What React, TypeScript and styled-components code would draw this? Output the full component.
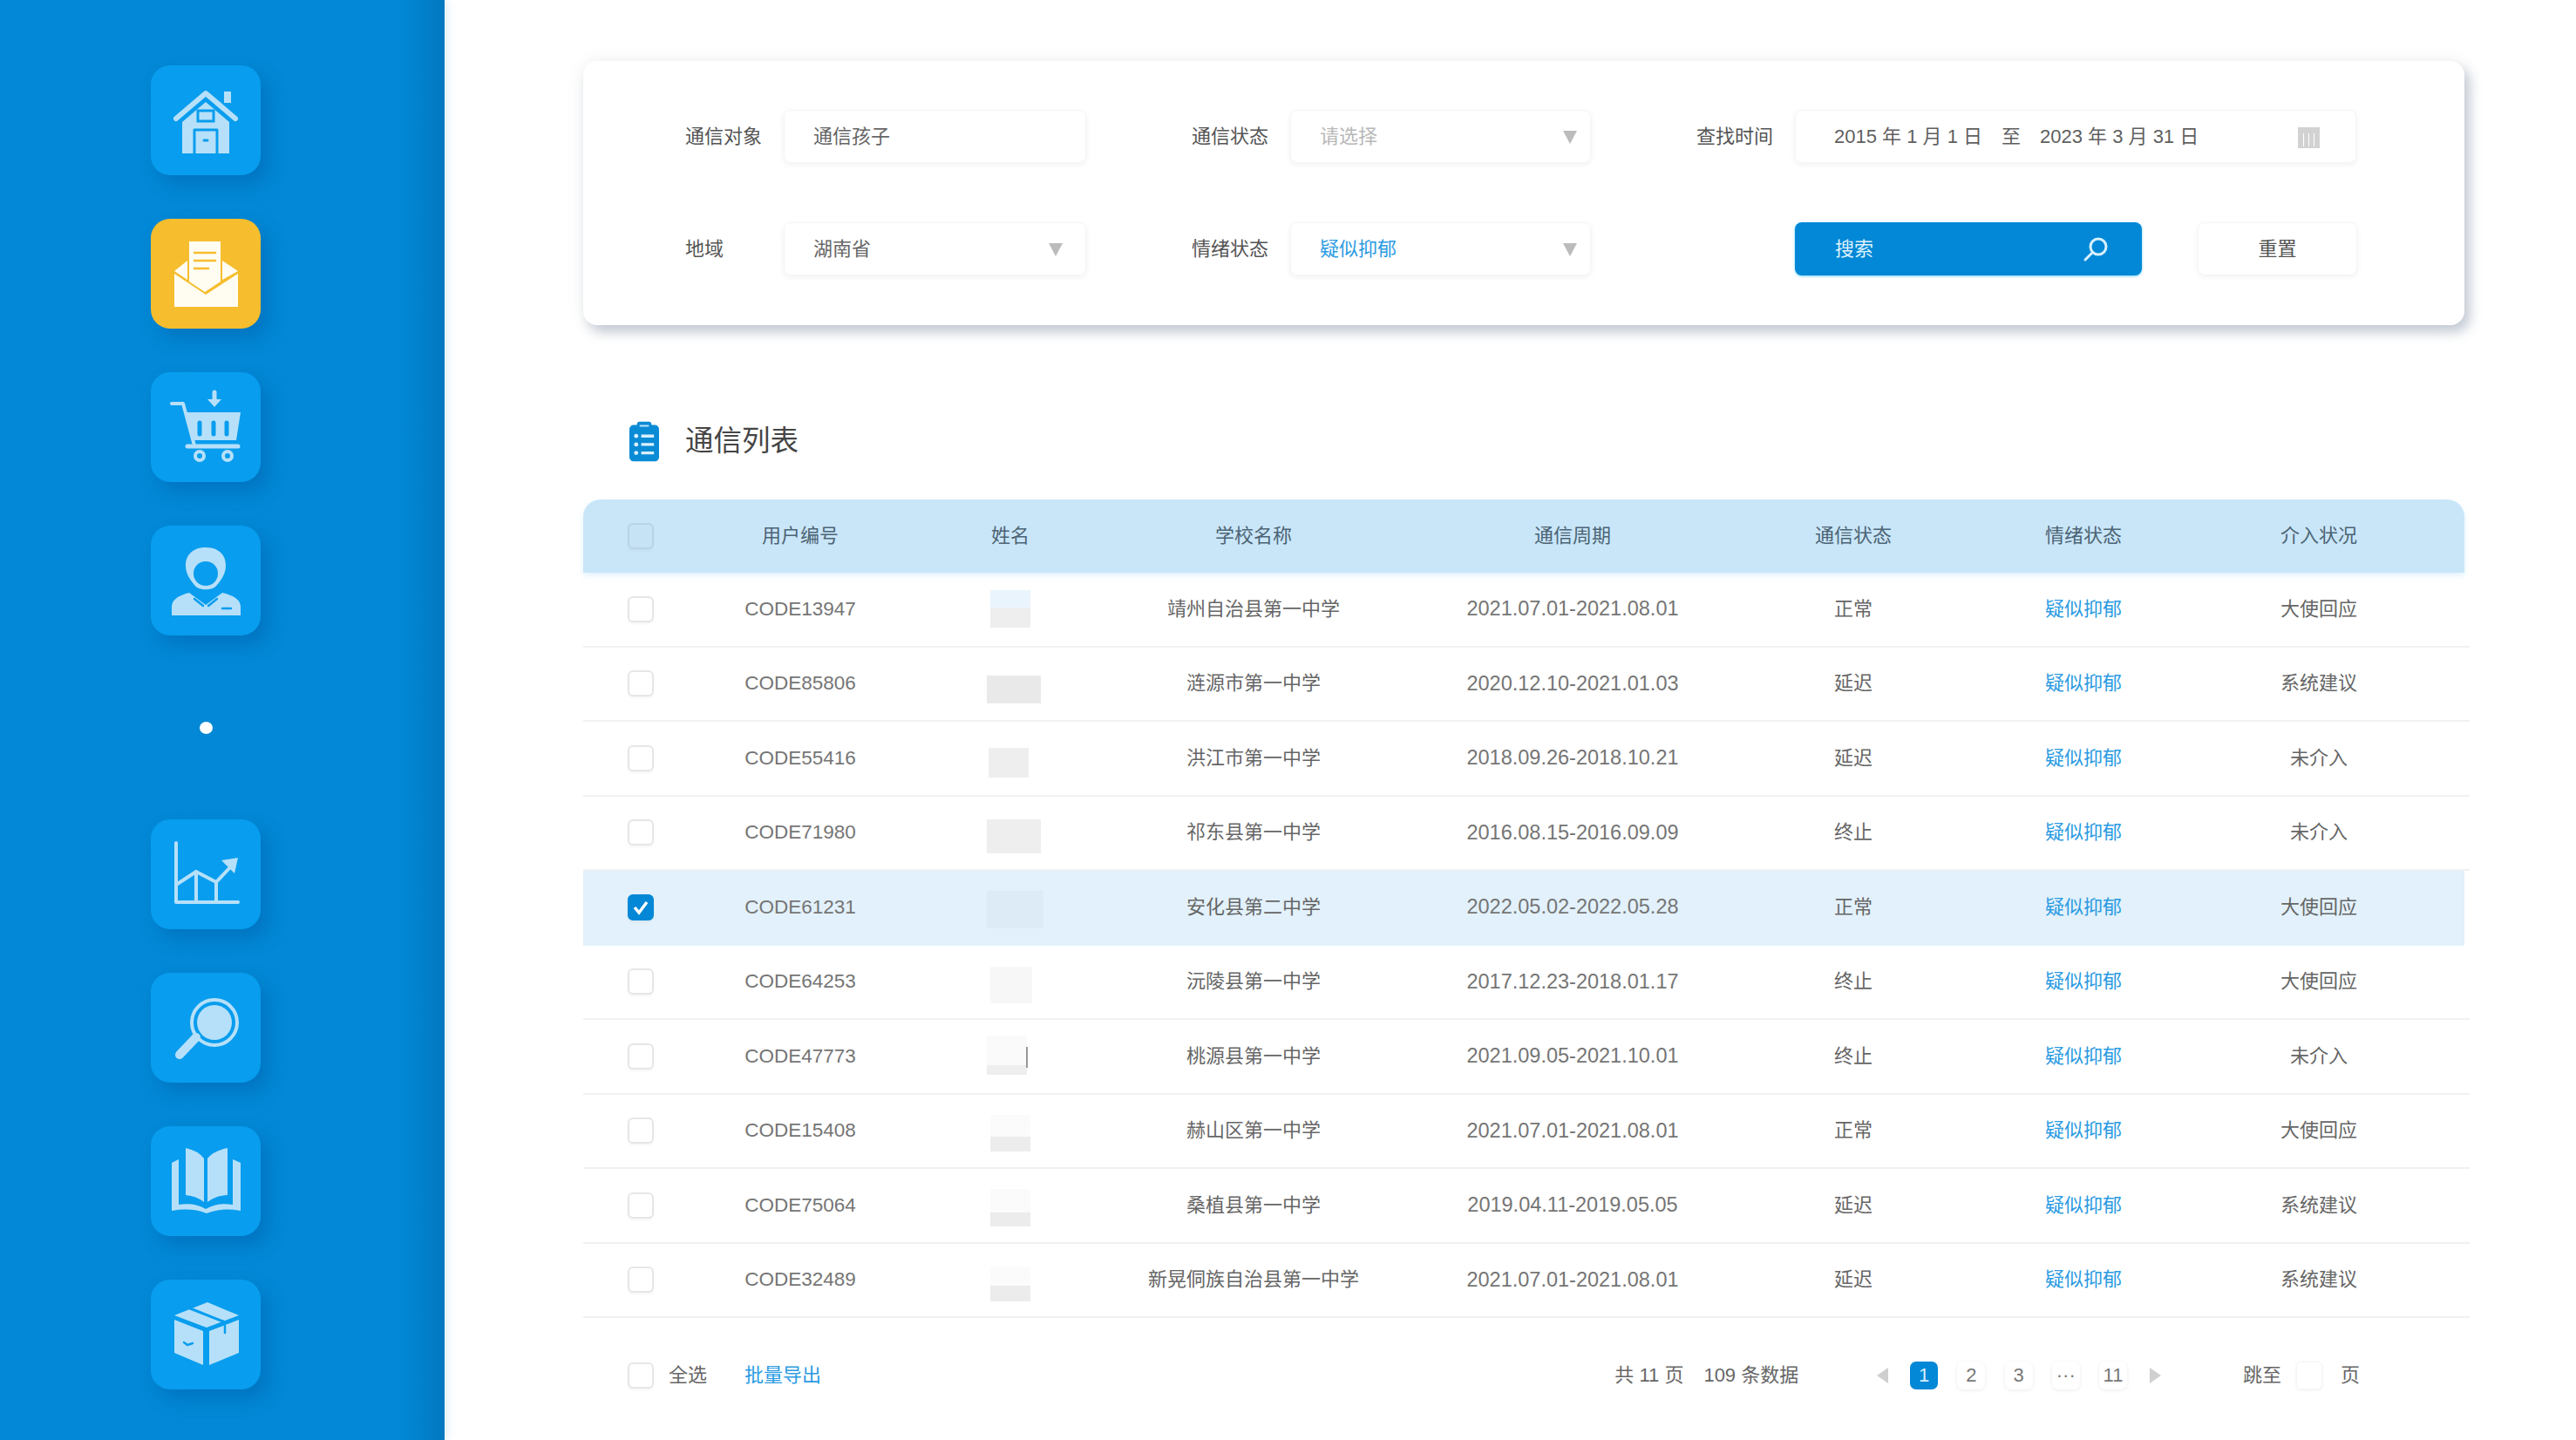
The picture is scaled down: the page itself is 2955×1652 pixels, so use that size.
import { ReactNode } from 'react';
import styled, { createGlobalStyle, css } from 'styled-components';

const blue = '#0288d6';
const link = '#2b9be2';

const GlobalStyle = createGlobalStyle`
  html, body {
    margin: 0;
    background: #fff;
    overflow: hidden;
  }

  * {
    box-sizing: border-box;
  }
`;

interface PatchSpec {
  w: number;
  h: number;
  top: number;
  shift?: number;
  split?: number;
  light?: string;
  tone: string;
  tick?: boolean;
}

interface RowData {
  code: string;
  school: string;
  period: string;
  status: string;
  care: string;
  patch: PatchSpec;
  selected?: boolean;
}

const rows: RowData[] = [
  { code: 'CODE13947', school: '靖州自治县第一中学', period: '2021.07.01-2021.08.01', status: '正常', care: '大使回应',
    patch: { w: 46, h: 43, top: 20, split: 20, light: '#e9f4fc', tone: '#eeeeee' } },
  { code: 'CODE85806', school: '涟源市第一中学', period: '2020.12.10-2021.01.03', status: '延迟', care: '系统建议',
    patch: { w: 62, h: 32, top: 32, shift: 4, tone: '#e9e9e9' } },
  { code: 'CODE55416', school: '洪江市第一中学', period: '2018.09.26-2018.10.21', status: '延迟', care: '未介入',
    patch: { w: 46, h: 34, top: 30, shift: -2, tone: '#eeeeee' } },
  { code: 'CODE71980', school: '祁东县第一中学', period: '2016.08.15-2016.09.09', status: '终止', care: '未介入',
    patch: { w: 62, h: 39, top: 26, shift: 4, tone: '#eeeeee' } },
  { code: 'CODE61231', school: '安化县第二中学', period: '2022.05.02-2022.05.28', status: '正常', care: '大使回应', selected: true,
    patch: { w: 65, h: 43, top: 23, shift: 5, tone: '#dcebf6' } },
  { code: 'CODE64253', school: '沅陵县第一中学', period: '2017.12.23-2018.01.17', status: '终止', care: '大使回应',
    patch: { w: 48, h: 42, top: 24, shift: 1, tone: '#f7f7f7' } },
  { code: 'CODE47773', school: '桃源县第一中学', period: '2021.09.05-2021.10.01', status: '终止', care: '未介入',
    patch: { w: 46, h: 45, top: 18, shift: -4, split: 34, light: '#fafafa', tone: '#eeeeee', tick: true } },
  { code: 'CODE15408', school: '赫山区第一中学', period: '2021.07.01-2021.08.01', status: '正常', care: '大使回应',
    patch: { w: 46, h: 42, top: 23, split: 25, light: '#fbfbfb', tone: '#ececec' } },
  { code: 'CODE75064', school: '桑植县第一中学', period: '2019.04.11-2019.05.05', status: '延迟', care: '系统建议',
    patch: { w: 46, h: 43, top: 23, split: 27, light: '#fbfbfb', tone: '#ececec' } },
  { code: 'CODE32489', school: '新晃侗族自治县第一中学', period: '2021.07.01-2021.08.01', status: '延迟', care: '系统建议',
    patch: { w: 46, h: 40, top: 26, split: 22, light: '#fbfbfb', tone: '#ececec' } },
];

const headers = ['用户编号', '姓名', '学校名称', '通信周期', '通信状态', '情绪状态', '介入状况'];

const Line = ({ d, w = 4 }: { d: string; w?: number }) => (
  <path d={d} fill="none" stroke="currentColor" strokeWidth={w} strokeLinecap="round" strokeLinejoin="round" />
);

const Cut = ({ d, w = 3 }: { d: string; w?: number }) => (
  <path d={d} fill="none" stroke="var(--cut)" strokeWidth={w} strokeLinecap="round" strokeLinejoin="round" />
);

const navIcons: ReactNode[] = [
  <>
    <rect x="84" y="30" width="8" height="13" />
    <Line d="M29 61 L63 32 L97 61" w={6} />
    <path d="M36 65 L63 42 L90 65 V101 H36Z" />
    <rect x="54" y="52" width="18" height="12" fill="none" stroke="var(--cut)" strokeWidth="3" />
    <Cut d="M50 101 V74 H76 V101" />
    <Cut d="M61 86 H65" />
  </>,
  <>
    <path d="M27 60 L42 48 V70Z" />
    <path d="M100 60 L82 48 V70Z" />
    <path d="M44 26 H80 V72 L62 84 L44 72Z" />
    <Cut d="M50 39 H74" w={2.5} />
    <Cut d="M50 48 H74" w={2.5} />
    <Cut d="M50 57 H66" w={2.5} />
    <path d="M27 63 L63 87 L100 63 V101 H27Z" />
  </>,
  <>
    <Line d="M24 36 H37 L50 84" />
    <path d="M40 46 H103 L98 78 H47Z" />
    <Cut d="M56 58 V71" w={5} />
    <Cut d="M72 58 V71" w={5} />
    <Cut d="M87 58 V71" w={5} />
    <Line d="M42 85 H100" w={5} />
    <circle cx="56" cy="96" r="5" fill="none" stroke="currentColor" strokeWidth="4" />
    <circle cx="88" cy="96" r="5" fill="none" stroke="currentColor" strokeWidth="4" />
    <Line d="M73 23 V33" w={5} />
    <path d="M65 31 H81 L73 40Z" />
  </>,
  <>
    <path d="M40 46 C40 32 50 25 63 25 C76 25 86 32 86 46 C86 55 81 62 76 68 C72 75 54 75 50 68 C45 62 40 55 40 46Z" />
    <ellipse cx="63" cy="55" rx="14" ry="14" fill="var(--cut)" />
    <path d="M24 103 V93 Q24 82 44 77 L63 91 L82 77 Q103 82 103 93 V103Z" />
    <Cut d="M50 84 L60 92" w={2.5} />
    <Cut d="M76 84 L66 92" w={2.5} />
    <Cut d="M82 95 H92" w={2.5} />
  </>,
  <>
    <Line d="M29 27 V95 H100" />
    <Line d="M29 75 L52 60 L75 72 L92 54" />
    <Line d="M52 60 V95" />
    <Line d="M75 72 V95" />
    <path d="M81 47 L100 44 L96 62Z" />
  </>,
  <>
    <circle cx="73" cy="57" r="26" fill="none" stroke="currentColor" strokeWidth="4" />
    <circle cx="73" cy="57" r="20" />
    <Line d="M52 74 L33 94" w={10} />
  </>,
  <>
    <path d="M24 42 L32 38 V90 Q50 87 63 95 Q76 87 94 90 V38 L103 42 V97 Q80 93 64 100 Q47 93 24 97Z" />
    <path d="M40 25 Q54 28 61 37 V87 Q52 80 40 79Z" />
    <path d="M88 25 Q72 28 65 37 V87 Q74 80 88 79Z" />
  </>,
  <>
    <path d="M27 41 L64 55 L101 41 L65 26Z" />
    <Cut d="M45 33 L83 48" w={3} />
    <path d="M27 46 L60 59 V98 L27 84Z" />
    <path d="M67 59 L101 46 V84 L67 98Z" />
    <Cut d="M38 72 L42 75 L48 73" w={2.5} />
    <Cut d="M85 53 V61" w={2.5} />
  </>,
];

const PageShell = styled.div`
  display: flex;
  width: 2955px;
  height: 1652px;
  font-family: 'Liberation Sans', 'Noto Sans CJK SC', sans-serif;
  font-size: 22px;
  line-height: 1;
  color: #666;
  overflow: hidden;
`;

const Sidebar = styled.nav`
  flex: none;
  width: 510px;
  padding: 75px 0 0 173px;
  display: flex;
  flex-direction: column;
  gap: 50px;
  background: linear-gradient(to right, ${blue} 0, ${blue} 90%, #0278bf 100%);
  box-shadow: 4px 0 10px rgba(2, 136, 214, 0.12);
`;

const NavButton = styled.div<{ $active?: boolean }>`
  width: 126px;
  height: 126px;
  border-radius: 22px;
  display: flex;
  --cut: ${({ $active }) => ($active ? '#f6bd2e' : '#089dee')};
  color: ${({ $active }) => ($active ? '#fffdf2' : '#b6e0f9')};
  background: var(--cut);
  box-shadow: 9px 11px 20px rgba(0, 90, 165, 0.42);

  svg {
    width: 126px;
    height: 126px;
    fill: currentColor;
  }
`;

const NavDot = styled.span`
  align-self: flex-start;
  width: 15px;
  height: 14px;
  margin: 49px 0 48px 56px;
  border-radius: 50%;
  background: #fff;
`;

const Main = styled.main`
  flex: 1;
  min-width: 0;
  padding: 70px 128px 0 159px;
  display: flex;
  flex-direction: column;
`;

const FilterCard = styled.section`
  flex: none;
  height: 303px;
  padding: 56px 0 0 117px;
  border-radius: 16px;
  background: #fff;
  display: grid;
  grid-template-columns: 460px 458px 757px;
  grid-auto-rows: 61px;
  column-gap: 121px;
  row-gap: 68px;
  box-shadow: 6px 8px 14px rgba(120, 135, 160, 0.42), 0 0 24px rgba(0, 0, 0, 0.05);
`;

const Field = styled.div`
  display: flex;
  align-items: center;
  gap: 25px;
`;

const FieldLabel = styled.label`
  flex: none;
  width: 88px;
  white-space: nowrap;
  color: #555;
`;

const Control = styled.div<{ $tone?: string; $inset?: number }>`
  flex: 1;
  height: 61px;
  padding: 0 15px 0 ${({ $inset }) => $inset ?? 33}px;
  display: flex;
  align-items: center;
  justify-content: space-between;
  border-radius: 8px;
  border: 1px solid #f5f5f5;
  color: ${({ $tone }) => $tone ?? '#666'};
  box-shadow: 0 2px 7px rgba(0, 0, 0, 0.06);
`;

const Caret = styled.i<{ $gap?: number }>`
  flex: none;
  width: 0;
  height: 0;
  margin: 2px ${({ $gap }) => $gap ?? 0}px 0 0;
  border-left: 8px solid transparent;
  border-right: 8px solid transparent;
  border-top: 15px solid #bbb;
`;

const DateTo = styled.span`
  margin: 0 22px;
`;

const CalendarIcon = styled.svg`
  flex: none;
  width: 27px;
  height: 26px;
  margin-right: 25px;
  fill: #d2d2d2;
`;

const Actions = styled.div`
  grid-column: 3;
  padding-left: 113px;
  display: flex;
  gap: 64px;
`;

const SearchButton = styled.button`
  flex: none;
  width: 398px;
  height: 61px;
  padding: 0 38px 0 46px;
  display: flex;
  align-items: center;
  justify-content: space-between;
  border: 0;
  border-radius: 8px;
  background: ${blue};
  color: #dff2fd;
  font: inherit;
  box-shadow: 0 1px 3px rgba(60, 190, 255, 0.7);
`;

const SearchGlass = styled.svg`
  width: 30px;
  height: 30px;
  fill: none;
  stroke: #d8f0fe;
  stroke-width: 3;
  stroke-linecap: round;
`;

const ResetButton = styled.button`
  flex: none;
  width: 183px;
  height: 61px;
  border: 1px solid #f5f5f5;
  border-radius: 8px;
  background: #fff;
  color: #555;
  font: inherit;
  box-shadow: 0 2px 7px rgba(0, 0, 0, 0.05);
`;

const ListTitle = styled.h2`
  flex: none;
  height: 200px;
  margin: 0;
  padding: 66px 0 0 53px;
  display: flex;
  align-items: center;
  gap: 30px;
  font-size: 32.5px;
  font-weight: 400;
  color: #454545;
`;

const ClipboardIcon = styled.svg`
  flex: none;
  width: 34px;
  height: 47px;
`;

const columns = '132px 234px 248px 310px 422px 222px 306px 234px 50px';

const HeaderRow = styled.div`
  flex: none;
  height: 84px;
  display: grid;
  grid-template-columns: ${columns};
  align-items: center;
  justify-items: center;
  border-radius: 20px 20px 0 0;
  background: #c9e6f9;
  color: #4c6474;
  box-shadow: 0 3px 6px rgba(201, 230, 249, 0.6);
`;

const Row = styled.div<{ $selected?: boolean }>`
  flex: none;
  height: 85.5px;
  display: grid;
  grid-template-columns: ${columns};
  align-items: center;
  justify-items: center;
  margin-right: -6px;
  border-bottom: 2px solid #f1f1f1;
  ${({ $selected }) =>
    $selected &&
    css`
      margin-right: 0;
      background: #e2f1fb;
      border-bottom-color: transparent;
    `}
`;

const Code = styled.span`
  font-size: 22.5px;
  white-space: nowrap;
  color: #757575;
`;

const Period = styled.span`
  font-size: 23.5px;
  white-space: nowrap;
  color: #757575;
`;

const Emotion = styled.span`
  color: ${link};
`;

const NameCell = styled.div`
  width: 100%;
  height: 100%;
  display: flex;
  justify-content: center;
  align-items: flex-start;
`;

const Patch = styled.span<{ $spec: PatchSpec }>`
  position: relative;
  flex: none;
  ${({ $spec }) => css`
    width: ${$spec.w}px;
    height: ${$spec.h}px;
    margin: ${$spec.top}px 0 0 ${(($spec.shift ?? 0) * 2)}px;
    background: ${$spec.split
      ? `linear-gradient(to bottom, ${$spec.light} ${$spec.split}px, ${$spec.tone} ${$spec.split}px)`
      : $spec.tone};
  `}

  ${({ $spec }) =>
    $spec.tick &&
    css`
      &::after {
        content: '';
        position: absolute;
        right: -1px;
        top: 13px;
        width: 2px;
        height: 24px;
        background: #999;
      }
    `}
`;

const Check = styled.span<{ $on?: boolean; $onHeader?: boolean }>`
  flex: none;
  width: 30px;
  height: 30px;
  display: flex;
  border-radius: 6px;
  border: 2px solid ${({ $onHeader }) => ($onHeader ? '#b9d3e4' : '#e6e6e6')};
  background: ${({ $onHeader }) => ($onHeader ? '#c6e2f5' : '#fff')};
  box-shadow: 0 2px 3px rgba(0, 0, 0, 0.04);

  ${({ $on }) =>
    $on &&
    css`
      border-color: ${blue};
      background: ${blue};
    `}

  svg {
    width: 26px;
    height: 26px;
    fill: none;
    stroke: #fff;
    stroke-width: 3.5;
  }
`;

const Footer = styled.footer`
  flex: none;
  height: 132px;
  padding: 0 120px 0 51px;
  display: flex;
  align-items: center;
`;

const SelectAll = styled.span`
  margin-left: 17px;
  color: #666;
`;

const ExportLink = styled.a`
  margin-left: 43px;
  color: ${link};
`;

const Pagination = styled.div`
  margin-left: auto;
  display: flex;
  align-items: center;
`;

const Summary = styled.span`
  color: #666;
  white-space: nowrap;

  & + & {
    margin-left: 23px;
  }
`;

const Arrow = styled.i<{ $right?: boolean }>`
  width: 0;
  height: 0;
  margin: ${({ $right }) => ($right ? '0 94px 0 26px' : '0 25px 0 90px')};
  border-top: 9px solid transparent;
  border-bottom: 9px solid transparent;
  ${({ $right }) =>
    $right ? 'border-left: 13px solid #cfcfcf;' : 'border-right: 13px solid #cfcfcf;'}
`;

const Pages = styled.div`
  display: flex;
  gap: 22.2px;
`;

const PageChip = styled.span<{ $current?: boolean }>`
  width: 32px;
  height: 32px;
  display: flex;
  align-items: center;
  justify-content: center;
  border-radius: 7px;
  color: ${({ $current }) => ($current ? '#d8f0fe' : '#777')};
  background: ${({ $current }) => ($current ? blue : '#fff')};
  box-shadow: ${({ $current }) => ($current ? 'none' : '0 1px 4px rgba(0, 0, 0, 0.08)')};
`;

const JumpBox = styled.span`
  width: 30px;
  height: 32px;
  margin: 0 21px 0 17px;
  border-radius: 6px;
  border: 1px solid #f5f5f5;
  box-shadow: 0 1px 4px rgba(0, 0, 0, 0.06);
`;

const App = () => (
  <PageShell>
    <GlobalStyle />
    <Sidebar>
      {navIcons.slice(0, 4).map((icon, index) => (
        <NavButton key={index} $active={index === 1}>
          <svg viewBox="0 0 126 126">{icon}</svg>
        </NavButton>
      ))}
      <NavDot />
      {navIcons.slice(4).map((icon, index) => (
        <NavButton key={index}>
          <svg viewBox="0 0 126 126">{icon}</svg>
        </NavButton>
      ))}
    </Sidebar>

    <Main>
      <FilterCard>
        <Field>
          <FieldLabel>通信对象</FieldLabel>
          <Control>通信孩子</Control>
        </Field>
        <Field>
          <FieldLabel>通信状态</FieldLabel>
          <Control $tone="#b8b8b8">请选择<Caret /></Control>
        </Field>
        <Field>
          <FieldLabel>查找时间</FieldLabel>
          <Control $tone="#5f5f5f" $inset={44}>
            <span>2015 年 1 月 1 日<DateTo>至</DateTo>2023 年 3 月 31 日</span>
            <CalendarIcon viewBox="0 0 27 26">
              <path d="M1 2h25v24H1zM7 9v15h1V9zM13 9v15h1V9zM19 9v15h1V9z" fillRule="evenodd" />
            </CalendarIcon>
          </Control>
        </Field>
        <Field>
          <FieldLabel>地域</FieldLabel>
          <Control>湖南省<Caret $gap={11} /></Control>
        </Field>
        <Field>
          <FieldLabel>情绪状态</FieldLabel>
          <Control $tone={link}>疑似抑郁<Caret /></Control>
        </Field>
        <Actions>
          <SearchButton>
            搜索
            <SearchGlass viewBox="0 0 30 30">
              <circle cx="18" cy="12" r="9" />
              <path d="M11 19 L3 27" />
            </SearchGlass>
          </SearchButton>
          <ResetButton>重置</ResetButton>
        </Actions>
      </FilterCard>

      <ListTitle>
        <ClipboardIcon viewBox="0 0 35 47">
          <rect x="0" y="4" width="35" height="43" rx="5" fill="#0a8bd6" />
          <rect x="9" y="0" width="17" height="8" rx="3" fill="#0a8bd6" />
          <path d="M12 5h11" stroke="#bfe3f8" strokeWidth="2" />
          <path d="M14 17h15M14 27h15M14 37h15" stroke="#d9f0fd" strokeWidth="3.5" />
          <circle cx="8" cy="17" r="2.5" fill="#d9f0fd" />
          <circle cx="8" cy="27" r="2.5" fill="#d9f0fd" />
          <circle cx="8" cy="37" r="2.5" fill="#d9f0fd" />
        </ClipboardIcon>
        通信列表
      </ListTitle>

      <HeaderRow>
        <Check $onHeader />
        {headers.map((title) => (
          <span key={title}>{title}</span>
        ))}
      </HeaderRow>

      {rows.map((row) => (
        <Row key={row.code} $selected={row.selected}>
          <Check $on={row.selected}>
            {row.selected && (
              <svg viewBox="0 0 26 26">
                <path d="M6 13 L11 19 L20 7" />
              </svg>
            )}
          </Check>
          <Code>{row.code}</Code>
          <NameCell>
            <Patch $spec={row.patch} />
          </NameCell>
          <span>{row.school}</span>
          <Period>{row.period}</Period>
          <span>{row.status}</span>
          <Emotion>疑似抑郁</Emotion>
          <span>{row.care}</span>
        </Row>
      ))}

      <Footer>
        <Check />
        <SelectAll>全选</SelectAll>
        <ExportLink>批量导出</ExportLink>
        <Pagination>
          <Summary>共 11 页</Summary>
          <Summary>109 条数据</Summary>
          <Arrow />
          <Pages>
            <PageChip $current>1</PageChip>
            <PageChip>2</PageChip>
            <PageChip>3</PageChip>
            <PageChip>···</PageChip>
            <PageChip>11</PageChip>
          </Pages>
          <Arrow $right />
          <span>跳至</span>
          <JumpBox />
          <span>页</span>
        </Pagination>
      </Footer>
    </Main>
  </PageShell>
);

export default App;
